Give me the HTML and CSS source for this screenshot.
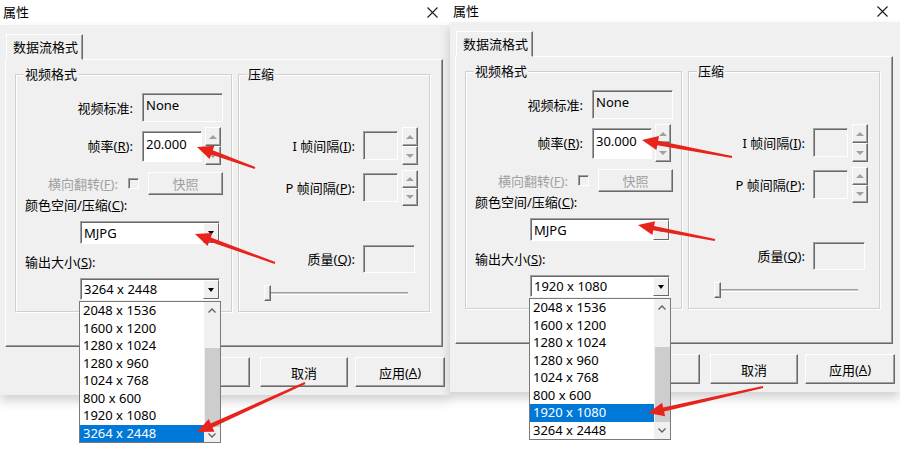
FILE: index.html
```html
<!DOCTYPE html>
<html lang="zh-CN">
<head>
  <meta charset="UTF-8">
  <title>属性</title>
  <link rel="stylesheet" href="styles.css">
</head>
<body>

<div class="screen">

  <!-- left dialog: 20 fps, 3264 x 2448 -->
  <div class="dialog">
    <div class="titlebar">
      <span class="title">属性</span>
      <svg class="close" width="11" height="11" viewBox="0 0 11 11"><path d="M0.5 0.5 L10.5 10.5 M10.5 0.5 L0.5 10.5" stroke="#1a1a1a" stroke-width="1.1" fill="none"/></svg>
    </div>
    <div class="body">
      <div class="tabs"><div class="tab">数据流格式</div></div>
      <div class="panel">
        <div class="group video">
          <div class="group-title">视频格式</div>
          <div class="row std">
            <span class="lbl">视频标准:</span>
            <div class="field sunken none">None</div>
          </div>
          <div class="row fps">
            <span class="lbl">帧率(<u>R</u>):</span>
            <div class="field edit">20.000</div>
            <div class="spin"><span class="up"></span><span class="down"></span></div>
          </div>
          <div class="row flip">
            <span class="lbl dim">横向翻转(<u>F</u>):</span>
            <span class="check"></span>
            <div class="btn snap">快照</div>
          </div>
          <div class="caption">颜色空间/压缩(<u>C</u>):</div>
          <div class="combo mjpg">MJPG<span class="drop"></span></div>
          <div class="caption out">输出大小(<u>S</u>):</div>
          <div class="combo size">3264 x 2448<span class="drop"></span></div>
        </div>
        <div class="group compress">
          <div class="group-title">压缩</div>
          <div class="row iframe">
            <span class="lbl">I 帧间隔(<u>I</u>):</span>
            <div class="field sunken small"></div>
            <div class="spin"><span class="up"></span><span class="down"></span></div>
          </div>
          <div class="row pframe">
            <span class="lbl">P 帧间隔(<u>P</u>):</span>
            <div class="field sunken small"></div>
            <div class="spin"><span class="up"></span><span class="down"></span></div>
          </div>
          <div class="row quality">
            <span class="lbl">质量(<u>Q</u>):</span>
            <div class="field sunken wide"></div>
          </div>
          <div class="slider"><span class="thumb"></span><span class="track"></span></div>
        </div>
      </div>
      <div class="buttons">
        <div class="btn ok">确定</div>
        <div class="btn cancel">取消</div>
        <div class="btn apply">应用(<u>A</u>)</div>
      </div>
    </div>

    <div class="listbox">
      <div class="items">
        <div class="item">2048 x 1536</div>
        <div class="item">1600 x 1200</div>
        <div class="item">1280 x 1024</div>
        <div class="item">1280 x 960</div>
        <div class="item">1024 x 768</div>
        <div class="item">800 x 600</div>
        <div class="item">1920 x 1080</div>
        <div class="item selected">3264 x 2448</div>
      </div>
      <div class="scrollbar">
        <svg class="sb-btn" width="16" height="17" viewBox="0 0 16 17"><polyline points="4.5,10.5 8,7 11.5,10.5" stroke="#606060" stroke-width="1.3" fill="none"/></svg>
        <div class="sb-track"><div class="sb-thumb"></div></div>
        <svg class="sb-btn" width="16" height="17" viewBox="0 0 16 17"><polyline points="4.5,6.5 8,10 11.5,6.5" stroke="#606060" stroke-width="1.3" fill="none"/></svg>
      </div>
    </div>

    <svg class="arrows" width="450" height="458" viewBox="0 0 450 458">
      <polygon points="197,147 214.4,145.8 212.7,150.3 255.3,167.1 254.7,168.9 211.3,154.5 209.6,159" />
      <polygon points="195,234 212.4,232.9 210.8,237.4 275.3,262.1 274.7,263.9 209.2,241.6 207.6,246.1" />
      <polygon points="197,432 208.7,419 210.7,423.4 304.6,382.1 305.4,383.9 212.5,427.4 214.5,431.8" />
    </svg>
  </div>

  <!-- right dialog: 30 fps, 1920 x 1080 -->
  <div class="dialog alt">
    <div class="titlebar">
      <span class="title">属性</span>
      <svg class="close" width="11" height="11" viewBox="0 0 11 11"><path d="M0.5 0.5 L10.5 10.5 M10.5 0.5 L0.5 10.5" stroke="#1a1a1a" stroke-width="1.1" fill="none"/></svg>
    </div>
    <div class="body">
      <div class="tabs"><div class="tab">数据流格式</div></div>
      <div class="panel">
        <div class="group video">
          <div class="group-title">视频格式</div>
          <div class="row std">
            <span class="lbl">视频标准:</span>
            <div class="field sunken none">None</div>
          </div>
          <div class="row fps">
            <span class="lbl">帧率(<u>R</u>):</span>
            <div class="field edit">30.000</div>
            <div class="spin"><span class="up"></span><span class="down"></span></div>
          </div>
          <div class="row flip">
            <span class="lbl dim">横向翻转(<u>F</u>):</span>
            <span class="check"></span>
            <div class="btn snap">快照</div>
          </div>
          <div class="caption">颜色空间/压缩(<u>C</u>):</div>
          <div class="combo mjpg">MJPG<span class="drop"></span></div>
          <div class="caption out">输出大小(<u>S</u>):</div>
          <div class="combo size">1920 x 1080<span class="drop"></span></div>
        </div>
        <div class="group compress">
          <div class="group-title">压缩</div>
          <div class="row iframe">
            <span class="lbl">I 帧间隔(<u>I</u>):</span>
            <div class="field sunken small"></div>
            <div class="spin"><span class="up"></span><span class="down"></span></div>
          </div>
          <div class="row pframe">
            <span class="lbl">P 帧间隔(<u>P</u>):</span>
            <div class="field sunken small"></div>
            <div class="spin"><span class="up"></span><span class="down"></span></div>
          </div>
          <div class="row quality">
            <span class="lbl">质量(<u>Q</u>):</span>
            <div class="field sunken wide"></div>
          </div>
          <div class="slider"><span class="thumb"></span><span class="track"></span></div>
        </div>
      </div>
      <div class="buttons">
        <div class="btn ok">确定</div>
        <div class="btn cancel">取消</div>
        <div class="btn apply">应用(<u>A</u>)</div>
      </div>
    </div>

    <div class="listbox">
      <div class="items">
        <div class="item">2048 x 1536</div>
        <div class="item">1600 x 1200</div>
        <div class="item">1280 x 1024</div>
        <div class="item">1280 x 960</div>
        <div class="item">1024 x 768</div>
        <div class="item">800 x 600</div>
        <div class="item selected">1920 x 1080</div>
        <div class="item">3264 x 2448</div>
      </div>
      <div class="scrollbar">
        <svg class="sb-btn" width="16" height="17" viewBox="0 0 16 17"><polyline points="4.5,10.5 8,7 11.5,10.5" stroke="#606060" stroke-width="1.3" fill="none"/></svg>
        <div class="sb-track"><div class="sb-thumb"></div></div>
        <svg class="sb-btn" width="16" height="17" viewBox="0 0 16 17"><polyline points="4.5,6.5 8,10 11.5,6.5" stroke="#606060" stroke-width="1.3" fill="none"/></svg>
      </div>
    </div>

    <svg class="arrows" width="450" height="458" viewBox="0 0 450 458">
      <polygon points="192,140 209,136.1 208.1,140.8 282.2,156 281.8,158 207.3,145.2 206.4,149.9" />
      <polygon points="188,225 205,221.2 204.1,225.9 265.2,239 264.8,241 203.3,230.3 202.4,235" />
      <polygon points="198,413 212.1,402.7 213.1,407.4 312.8,386 313.2,388 214.1,411.6 215.1,416.3" />
    </svg>
  </div>

</div>

</body>
</html>
```

FILE: styles.css
```css
/* Windows classic property dialog, twice */
body {
  margin: 0;
  background-color: #fff;
  font-family: "Noto Sans", "Noto Sans CJK SC", sans-serif;
  font-size: 13px;
  color: #000;
}
u {
  text-decoration: underline;
  text-underline-offset: 1px;
}
.screen {
  display: flex;
  width: 900px;
  height: 458px;
  overflow: hidden;
}
.dialog {
  position: relative;
  width: 450px;
  height: 458px;
  flex: none;
}

/* title bar */
.titlebar {
  display: flex;
  align-items: center;
  justify-content: space-between;
  height: 25px;
  padding: 0 12px 0 3px;
  box-sizing: border-box;
  background-color: #fff;
}
.alt .titlebar {
  height: 22px;
}
.title {
  line-height: 16px;
  margin-top: -2px;
}
.alt .title {
  margin-top: 0;
}

/* dialog body */
.body {
  background-color: #f0f0f0;
  padding: 9px 5px 8px 5px;
  box-shadow: 0 6px 10px rgba(0,0,0,0.18);
}
.tabs {
  display: flex;
  padding-left: 1px;
  position: relative;
  z-index: 1;
}
.tab {
  width: 77px;
  height: 26px;
  box-sizing: border-box;
  margin-bottom: -1px;
  padding-left: 6px;
  line-height: 24px;
  background-color: #f0f0f0;
  border: 1px solid;
  border-color: #fff #696969 transparent #fff;
  box-shadow: inset -1px 0 #a0a0a0;
}
.panel {
  display: flex;
  align-items: flex-start;
  gap: 6px;
  width: 438px;
  height: 288px;
  box-sizing: border-box;
  padding: 14px 0 0 9px;
  border: 1px solid;
  border-color: #fff #696969 #696969 #fff;
  box-shadow: inset -1px -1px #a0a0a0;
}

/* group boxes */
.group {
  height: 238px;
  box-sizing: border-box;
  border: 1px solid #d0d0d0;
  box-shadow: inset 1px 1px #fff, 1px 1px #fff;
}
.video {
  width: 217px;
}
.compress {
  width: 192px;
}
.group-title {
  width: fit-content;
  margin: -8px 0 0 8px;
  padding: 0 1px;
  line-height: 14px;
  background-color: #f0f0f0;
}
.row {
  display: flex;
  align-items: center;
}
.lbl {
  flex: none;
  text-align: right;
  line-height: 14px;
}
.video .lbl {
  width: 117px;
  margin-right: 9px;
}
.compress .lbl {
  width: 116px;
  margin-right: 8px;
}
.dim {
  color: #a0a0a0;
}
.row.std {
  margin-top: 12px;
  height: 29px;
}
.row.fps {
  margin-top: 5px;
  height: 38px;
}
.row.flip {
  margin-top: 7px;
  height: 23px;
}
.video .row.flip .lbl {
  width: 102px;
  margin-right: 10px;
}
.row.iframe {
  margin-top: 46px;
  height: 38px;
}
.row.pframe {
  margin-top: 5px;
  height: 36px;
}
.row.quality {
  margin-top: 39px;
  height: 28px;
}

/* fields */
.field {
  box-sizing: border-box;
  display: flex;
  align-items: center;
  padding-left: 3px;
  border: 1px solid;
  border-color: #a0a0a0 #fff #fff #a0a0a0;
  box-shadow: inset 1px 1px #696969;
}
.sunken {
  background-color: #f0f0f0;
}
.none {
  width: 81px;
  height: 29px;
  padding-bottom: 6px;
}
.edit {
  width: 60px;
  height: 31px;
  padding-bottom: 4px;
  background-color: #fff;
}
.small {
  width: 35px;
  height: 29px;
  margin-top: -2px;
}
.wide {
  width: 52px;
  height: 28px;
}
.spin {
  display: flex;
  flex-direction: column;
  width: 16px;
  height: 100%;
  margin-left: 3px;
}
.compress .spin {
  margin-left: 4px;
}
.spin span {
  flex: 1;
  display: flex;
  align-items: center;
  justify-content: center;
  background-color: #f0f0f0;
  border: 1px solid;
  border-color: #fff #696969 #696969 #fff;
  box-shadow: inset -1px -1px #a0a0a0;
}
.spin .up::after {
  content: '';
  border-left: 4px solid transparent;
  border-right: 4px solid transparent;
  border-bottom: 4px solid #a0a0a0;
}
.spin .down::after {
  content: '';
  border-left: 4px solid transparent;
  border-right: 4px solid transparent;
  border-top: 4px solid #a0a0a0;
}
.check {
  width: 11px;
  height: 11px;
  box-sizing: border-box;
  background-color: #f0f0f0;
  border: 1px solid;
  border-color: #a0a0a0 #fff #fff #a0a0a0;
  box-shadow: inset 1px 1px #696969;
}

/* buttons */
.btn {
  display: flex;
  align-items: center;
  justify-content: center;
  box-sizing: border-box;
  background-color: #f0f0f0;
  border: 1px solid;
  border-color: #fff #696969 #696969 #fff;
  box-shadow: inset -1px -1px #a0a0a0;
}
.snap {
  width: 75px;
  height: 23px;
  margin-left: 9px;
  color: #a0a0a0;
}
.buttons {
  display: flex;
  justify-content: flex-end;
  margin-top: 10px;
}
.buttons .btn {
  height: 30px;
  width: 88px;
}
.buttons .cancel {
  margin-left: 10px;
}
.buttons .apply {
  width: 90px;
  margin-left: 7px;
}

/* captions and combos */
.caption {
  margin: 3px 0 0 9px;
  line-height: 14px;
}
.caption.out {
  margin-top: 11px;
}
.combo {
  display: flex;
  align-items: center;
  width: 140px;
  box-sizing: border-box;
  margin: 9px 0 0 64px;
  padding-left: 3px;
  background-color: #fff;
  border: 1px solid;
  border-color: #a0a0a0 #fff #fff #a0a0a0;
  box-shadow: inset 1px 1px #696969;
}
.mjpg {
  height: 23px;
}
.size {
  height: 22px;
}
.drop {
  align-self: stretch;
  display: flex;
  align-items: center;
  justify-content: center;
  width: 16px;
  margin: 1px 0 0 auto;
  box-sizing: border-box;
  background-color: #f0f0f0;
  border: 1px solid;
  border-color: #fff #696969 #696969 #fff;
}
.drop::after {
  content: '';
  border-left: 3.5px solid transparent;
  border-right: 3.5px solid transparent;
  border-top: 4px solid #000;
}

/* slider */
.slider {
  display: flex;
  align-items: center;
  width: 144px;
  margin: 12px 0 0 25px;
}
.thumb {
  position: relative;
  z-index: 1;
  width: 7px;
  height: 16px;
  box-sizing: border-box;
  background-color: #f0f0f0;
  border: 1px solid;
  border-color: #fff #696969 #696969 #fff;
  box-shadow: inset -1px -1px #a0a0a0;
}
.track {
  flex: 1;
  height: 3px;
  margin-left: -3px;
  box-sizing: border-box;
  border-top: 1px solid #a0a0a0;
  border-bottom: 1px solid #fff;
  background-color: #c8c8c8;
}

/* dropped list */
.listbox {
  position: absolute;
  left: 79px;
  top: 301px;
  width: 142px;
  height: 142px;
  box-sizing: border-box;
  display: flex;
  background-color: #fff;
  border: 1px solid #7a7a7a;
  z-index: 2;
}
.alt .listbox {
  top: 298px;
}
.items {
  flex: 1;
}
.item {
  height: 17.5px;
  line-height: 17.5px;
  padding-left: 3px;
  white-space: nowrap;
}
.item.selected {
  background-color: #0078d7;
  color: #fff;
}
.scrollbar {
  display: flex;
  flex-direction: column;
  width: 16px;
  background-color: #f0f0f0;
}
.sb-btn {
  flex: none;
}
.sb-track {
  flex: 1;
}
.sb-thumb {
  width: 15px;
  margin: 29px 0 0 1px;
  height: 79px;
  background-color: #cdcdcd;
}
.alt .sb-thumb {
  margin-top: 31px;
  height: 75px;
}

/* red annotation arrows */
.arrows {
  position: absolute;
  left: 0;
  top: 0;
  z-index: 3;
  pointer-events: none;
}
.arrows polygon {
  fill: #e8231b;
}
```
